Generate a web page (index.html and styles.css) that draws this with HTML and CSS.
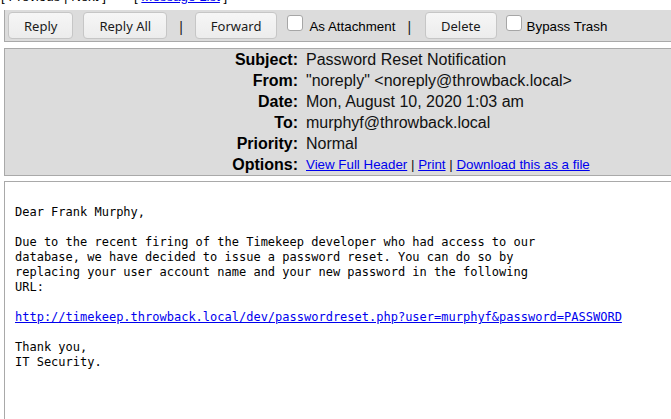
FILE: index.html
```html
<!DOCTYPE html>
<html>
<head>
<meta charset="utf-8">
<link rel="stylesheet" href="styles.css">
</head>
<body>
<div class="nav">[ Previous | Next ]<span class="navgap"></span>[ <a href="#">Message List</a> ]</div>
<div class="toolbar">
  <button class="btn">Reply</button>
  <button class="btn btn-gap">Reply All</button>
  <span class="sep">|</span>
  <button class="btn">Forward</button>
  <label class="chk"><span class="box"></span>As Attachment</label>
  <span class="sep sep2">|</span>
  <button class="btn">Delete</button>
  <label class="chk chk2"><span class="box"></span>Bypass Trash</label>
</div>
<div class="headers">
  <div class="lbl">Subject:</div><div class="val">Password Reset Notification</div>
  <div class="lbl">From:</div><div class="val">"noreply" &lt;noreply@throwback.local&gt;</div>
  <div class="lbl">Date:</div><div class="val">Mon, August 10, 2020 1:03 am</div>
  <div class="lbl">To:</div><div class="val">murphyf@throwback.local</div>
  <div class="lbl">Priority:</div><div class="val">Normal</div>
  <div class="lbl">Options:</div><div class="val opts"><a href="#">View Full Header</a> | <a href="#">Print</a> | <a href="#">Download this as a file</a></div>
</div>
<div class="body">
<pre class="msg">

Dear Frank Murphy,

Due to the recent firing of the Timekeep developer who had access to our
database, we have decided to issue a password reset. You can do so by
replacing your user account name and your new password in the following
URL:

<a href="#">http://timekeep.throwback.local/dev/passwordreset.php?user=murphyf&amp;password=PASSWORD</a>

Thank you,
IT Security.
</pre>
</div>
</body>
</html>
```
FILE: styles.css
```css
html, body {
  margin: 0;
  padding: 0;
  background: #fff;
  overflow: hidden;
  height: 419px;
}
body {
  font-family: "Liberation Sans", Arial, sans-serif;
  color: #000;
}
a { color: #0000ee; }

.nav {
  margin-top: -11px;
  height: 21px;
  line-height: 16px;
  font-size: 13.33px;
  padding-left: 1px;
  white-space: nowrap;
}
.navgap { display: inline-block; width: 28px; }

.toolbar {
  margin-left: 4px;
  border-left: 1px solid #a9a9a9;
  border-bottom: 1px solid #a9a9a9;
  background: #dcdcdc;
  padding: 2px 0 2px 3px;
  display: flex;
  align-items: center;
  height: 27px;
  white-space: nowrap;
}
.btn {
  height: 27px;
  padding: 0 15px;
  font-family: "Noto Sans", "Open Sans", sans-serif;
  font-size: 13px;
  color: #1a1a1a;
  background: linear-gradient(#f6f6f6, #ececec);
  border: 1px solid #c6c6c6;
  border-radius: 4px;
  margin: 0;
}
.btn-gap { margin-left: 10px; }
.sep {
  font-size: 14px;
  padding: 0 12px;
  color: #222;
  position: relative;
  top: 1px;
}
.sep2 { padding: 0 14px 0 12px; }
.chk {
  display: flex;
  align-items: center;
  font-size: 13.33px;
  margin-left: 10px;
  line-height: 16px;
  position: relative;
  top: 1px;
}
.chk .box {
  width: 14px;
  height: 14px;
  border: 1px solid #a6a6a6;
  border-radius: 3px;
  background: #fff;
  margin-right: 6px;
  position: relative;
  top: -4px;
}
.chk2 { margin-left: 9px; }
.chk2 .box { margin-right: 5px; }

.headers {
  margin: 6px 0 0 4px;
  border-top: 1px solid #a9a9a9;
  border-left: 1px solid #a9a9a9;
  border-bottom: 1px solid #a9a9a9;
  background: #dcdcdc;
  display: grid;
  grid-template-columns: 293px 1fr;
  column-gap: 8px;
  font-size: 16px;
  line-height: 21px;
  height: 126px;
}
.lbl {
  text-align: right;
  font-weight: bold;
}
.val { white-space: nowrap; color: #111; }
.opts { font-size: 13.33px; }

.body {
  margin: 5px 0 0 4px;
  border-top: 1px solid #a9a9a9;
  border-left: 1px solid #a9a9a9;
  height: 229px;
  padding: 8px 0 0 10px;
}
.msg {
  margin: 0;
  font-family: "DejaVu Sans Mono", monospace;
  font-size: 12px;
  line-height: 15px;
  color: #000;
}
```
